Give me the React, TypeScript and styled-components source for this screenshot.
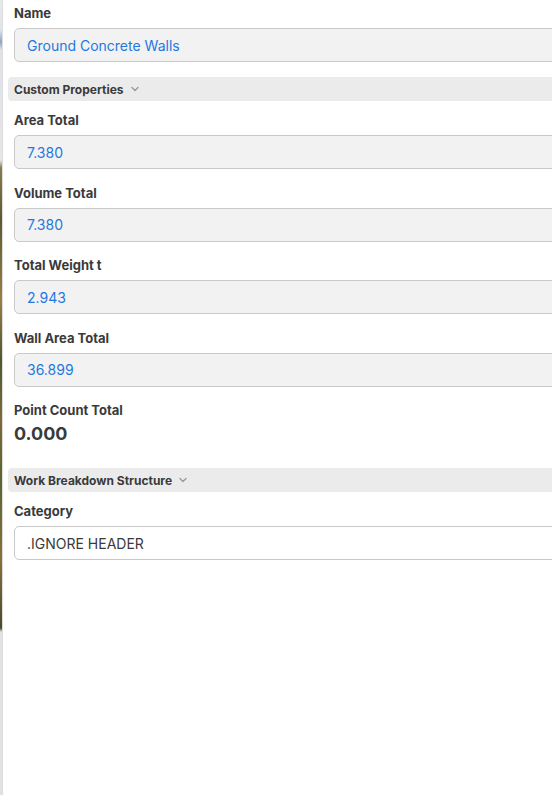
import React from 'react';
import styled, { createGlobalStyle } from 'styled-components';

const GlobalStyle = createGlobalStyle`
  html, body {
    margin: 0;
    padding: 0;
    background: #ffffff;
    overflow: hidden;
  }
  body {
    font-family: Inter, "Noto Sans", "Liberation Sans", sans-serif;
  }
`;

const Layout = styled.div`
  display: flex;
  height: 795px;
  width: 620px;
`;

// sliver of the map showing behind the side panel
const MapEdge = styled.div`
  width: 2px;
  flex-shrink: 0;
  background: linear-gradient(
    to bottom,
    #e9e9e9 0px,
    #dfe4ea 30px,
    #8ea3bf 42px,
    #dfe3e8 50px,
    #e4e6e8 160px,
    #8a7a4a 168px,
    #5e5a2e 220px,
    #9a7e46 300px,
    #4c5a2a 360px,
    #7c6a3a 420px,
    #5a6630 480px,
    #86703e 560px,
    #4a4a28 628px,
    #e2e2e2 632px,
    #e2e2e2 100%
  );
`;

const Panel = styled.div`
  flex: 1;
  border-left: 1px solid #dcdcdc;
  padding: 5px 0 0 5px;
  display: flex;
  flex-direction: column;
`;

const Field = styled.div`
  display: flex;
  flex-direction: column;
  padding-left: 6px;
  margin-bottom: 15.6px;
`;

const Label = styled.div`
  font-size: 13px;
  line-height: 16px;
  font-weight: 700;
  color: #3a3a3a;
  margin-bottom: 7px;
`;

const ValueBox = styled.div<{ $editable?: boolean }>`
  box-sizing: border-box;
  height: 34px;
  display: flex;
  align-items: center;
  padding-left: 12px;
  border: 1px solid #c9c9c9;
  border-radius: 5px;
  background: ${({ $editable }) => ($editable ? '#ffffff' : '#f2f2f2')};
  color: ${({ $editable }) => ($editable ? '#3a3a3a' : '#1f78e0')};
  font-size: 14px;
`;

const BigValue = styled.div`
  font-size: 18px;
  line-height: 24px;
  font-weight: 700;
  color: #3a3a3a;
  margin-top: -3px;
`;

const SectionHeader = styled.div`
  display: flex;
  align-items: center;
  gap: 6px;
  height: 24px;
  padding-left: 6px;
  margin-bottom: 11px;
  background: #ebebeb;
  border-radius: 4px 0 0 4px;
  font-size: 12px;
  font-weight: 700;
  color: #3a3a3a;
`;

const Chevron = () => (
  <svg width="10" height="10" viewBox="0 0 10 10" fill="none">
    <path d="M2 3.5 L5 6.5 L8 3.5" stroke="#9a9a9a" strokeWidth="1.4" strokeLinecap="round" strokeLinejoin="round" />
  </svg>
);

const quantities = [
  { label: 'Area Total', value: '7.380' },
  { label: 'Volume Total', value: '7.380' },
  { label: 'Total Weight t', value: '2.943' },
  { label: 'Wall Area Total', value: '36.899' },
];

export default function App() {
  return (
    <>
      <GlobalStyle />
      <Layout>
        <MapEdge />
        <Panel>
          <Field style={{ marginBottom: 15 }}>
            <Label>Name</Label>
            <ValueBox>Ground Concrete Walls</ValueBox>
          </Field>

          <SectionHeader>
            Custom Properties
            <Chevron />
          </SectionHeader>

          {quantities.map((q) => (
            <Field key={q.label}>
              <Label>{q.label}</Label>
              <ValueBox>{q.value}</ValueBox>
            </Field>
          ))}

          <Field style={{ marginBottom: 22 }}>
            <Label>Point Count Total</Label>
            <BigValue>0.000</BigValue>
          </Field>

          <SectionHeader>
            Work Breakdown Structure
            <Chevron />
          </SectionHeader>

          <Field>
            <Label>Category</Label>
            <ValueBox $editable>.IGNORE HEADER</ValueBox>
          </Field>
        </Panel>
      </Layout>
    </>
  );
}
